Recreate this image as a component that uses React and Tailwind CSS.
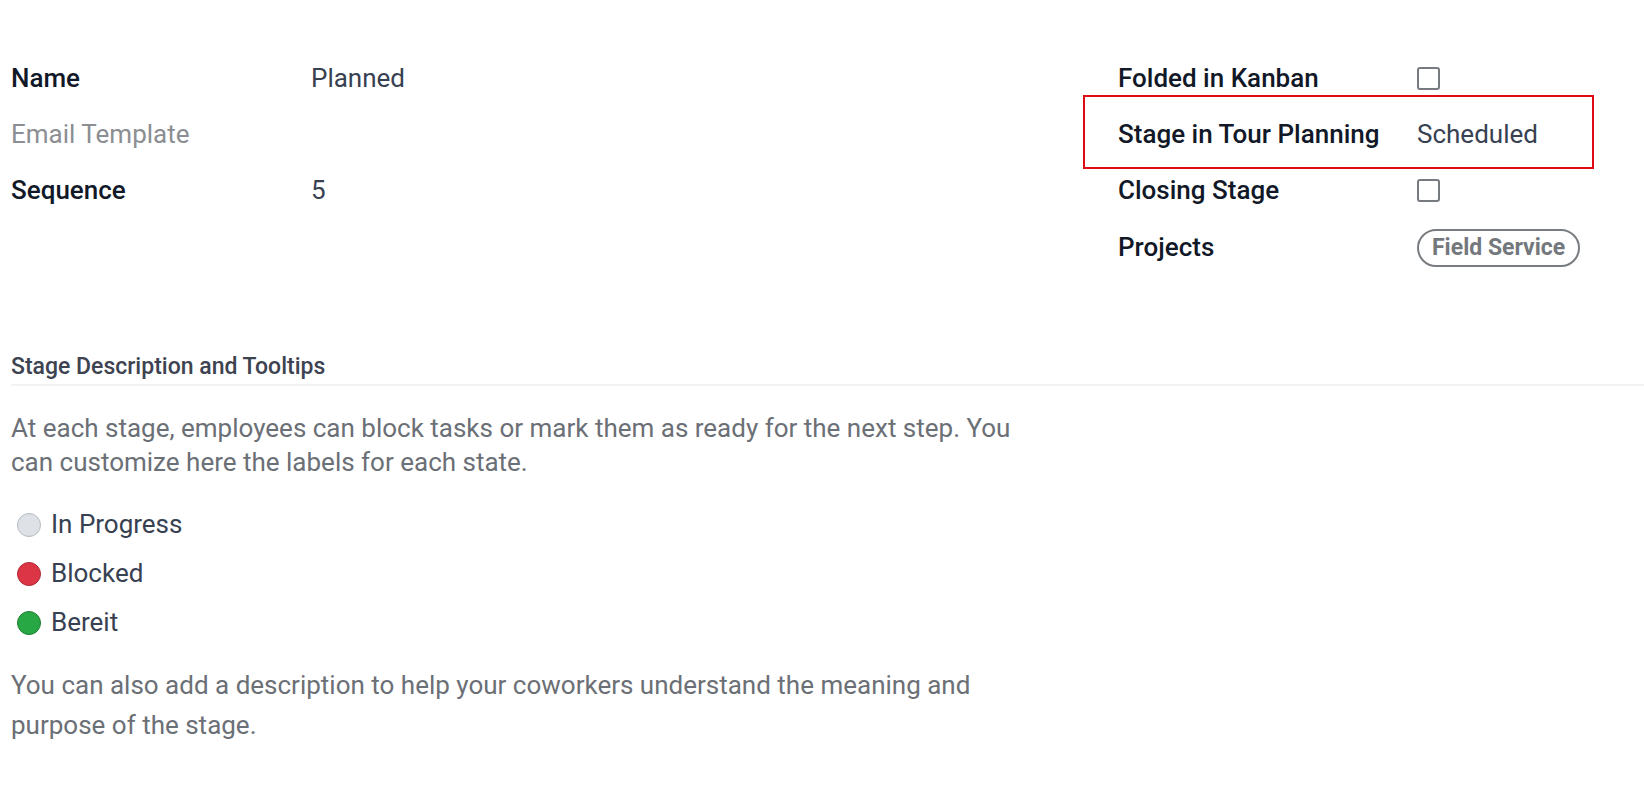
const leftFields = [
  { label: 'Name', value: 'Planned' },
  { label: 'Email Template', value: '', muted: true },
  { label: 'Sequence', value: '5' },
]

const states = [
  { label: 'In Progress', dot: 'bg-[#dee2e6] border-[#b5bbc1]' },
  { label: 'Blocked', dot: 'bg-[#dc3545] border-[#b02a37]' },
  { label: 'Bereit', dot: 'bg-[#28a745] border-[#1e7e34]' },
]

function Checkbox() {
  return <span className="block h-[23px] w-[23px] rounded-[3px] border-2 border-[#777b80] bg-white" />
}

function Row({ label, muted, labelWidth, children }) {
  return (
    <div className="flex h-[56.3px] items-center">
      <div
        className={
          muted
            ? 'shrink-0 text-[26px] font-normal text-[#8b8e92]'
            : 'shrink-0 text-[26px] font-medium text-[#111827]'
        }
        style={{ width: labelWidth }}
      >
        {label}
      </div>
      <div className="text-[26px] text-[#374151]">{children}</div>
    </div>
  )
}

export default function App() {
  return (
    <div className="min-h-screen bg-white font-['Roboto',sans-serif]">
      <div className="flex pl-[11px] pt-[50px]">
        <div className="w-[1107px]">
          {leftFields.map((f) => (
            <Row key={f.label} label={f.label} muted={f.muted} labelWidth={300}>
              {f.value}
            </Row>
          ))}
        </div>

        <div className="relative">
          <Row label="Folded in Kanban" labelWidth={299}>
            <Checkbox />
          </Row>
          <Row label="Stage in Tour Planning" labelWidth={299}>
            Scheduled
          </Row>
          <Row label="Closing Stage" labelWidth={299}>
            <Checkbox />
          </Row>
          <Row label="Projects" labelWidth={299}>
            <span className="inline-flex h-[38px] items-center rounded-full border-2 border-[#787c81] px-[13px] text-[23px] font-bold text-[#74787d]">
              Field Service
            </span>
          </Row>
          {/* highlight annotation */}
          <div className="pointer-events-none absolute left-[-35px] top-[45px] h-[74px] w-[511px] border-[2.5px] border-[#e00b12]" />
        </div>
      </div>

      <div className="mt-[77px] pl-[11px]">
        <h3 className="border-b-2 border-[#f2f2f2] pb-[2px] text-[23px] leading-[30px] font-medium text-[#3d4350]">
          Stage Description and Tooltips
        </h3>

        <p className="mt-[26px] w-[1030px] text-[26px] leading-[33.5px] text-[#6b6f76]">
          At each stage, employees can block tasks or mark them as ready for the next step. You can customize here
          the labels for each state.
        </p>

        <ul className="mt-[21px] flex flex-col">
          {states.map((s) => (
            <li key={s.label} className="flex h-[49px] items-center gap-[10px] pl-[6px]">
              <span className={`h-[24px] w-[24px] rounded-full border ${s.dot}`} />
              <span className="text-[26px] text-[#374151]">{s.label}</span>
            </li>
          ))}
        </ul>

        <p className="mt-[18px] w-[1030px] text-[26px] leading-[40px] text-[#6b6f76]">
          You can also add a description to help your coworkers understand the meaning and purpose of the stage.
        </p>
      </div>
    </div>
  )
}
